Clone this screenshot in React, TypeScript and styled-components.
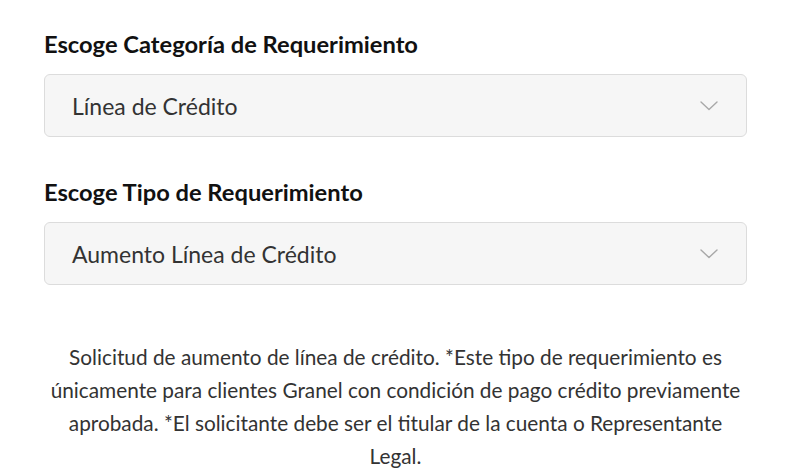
import React from "react";
import styled, {createGlobalStyle} from "styled-components";

const GlobalStyle = createGlobalStyle`
  body {
    margin: 0;
    background: #ffffff;
    font-family: Lato, "Noto Sans", sans-serif;
    color: #222;
  }
`;

const Page = styled.div`
  width: 703px;
  padding: 28px 53px 0 44px;
  display: flex;
  flex-direction: column;
`;

const Field = styled.div`
  display: flex;
  flex-direction: column;
  margin-bottom: 39px;
`;

const Label = styled.label`
  font-size: 23.7px;
  font-weight: 700;
  color: #111;
  line-height: 32px;
  margin-bottom: 14px;
`;

const SelectBox = styled.div`
  height: 63px;
  box-sizing: border-box;
  border: 1px solid #dcdcdc;
  border-radius: 6px;
  background: #f6f6f6;
  display: flex;
  align-items: center;
  justify-content: space-between;
  padding: 0 28px 0 27px;
`;

const SelectValue = styled.span`
  font-size: 23px;
  color: #333;
`;

const Chevron = () => (
    <svg width="18" height="10" viewBox="0 0 18 10" fill="none">
        <path d="M1 1 L9 8.5 L17 1" stroke="#a8a8a8" strokeWidth="1.4" strokeLinecap="round" strokeLinejoin="round"/>
    </svg>
);

const Description = styled.p`
  margin: 16px 0 0;
  text-align: center;
  font-size: 20.8px;
  line-height: 33px;
  color: #333;
  white-space: nowrap;
`;

const Select: React.FC<{ value: string }> = ({value}) => (
    <SelectBox>
        <SelectValue>{value}</SelectValue>
        <Chevron/>
    </SelectBox>
);

const App: React.FC = () => (
    <>
        <GlobalStyle/>
        <Page>
            <Field>
                <Label>Escoge Categoría de Requerimiento</Label>
                <Select value="Línea de Crédito"/>
            </Field>
            <Field>
                <Label>Escoge Tipo de Requerimiento</Label>
                <Select value="Aumento Línea de Crédito"/>
            </Field>
            <Description>
                Solicitud de aumento de línea de crédito. *Este tipo de requerimiento es<br/>
                únicamente para clientes Granel con condición de pago crédito previamente<br/>
                aprobada. *El solicitante debe ser el titular de la cuenta o Representante<br/>
                Legal.
            </Description>
        </Page>
    </>
);

export default App;
